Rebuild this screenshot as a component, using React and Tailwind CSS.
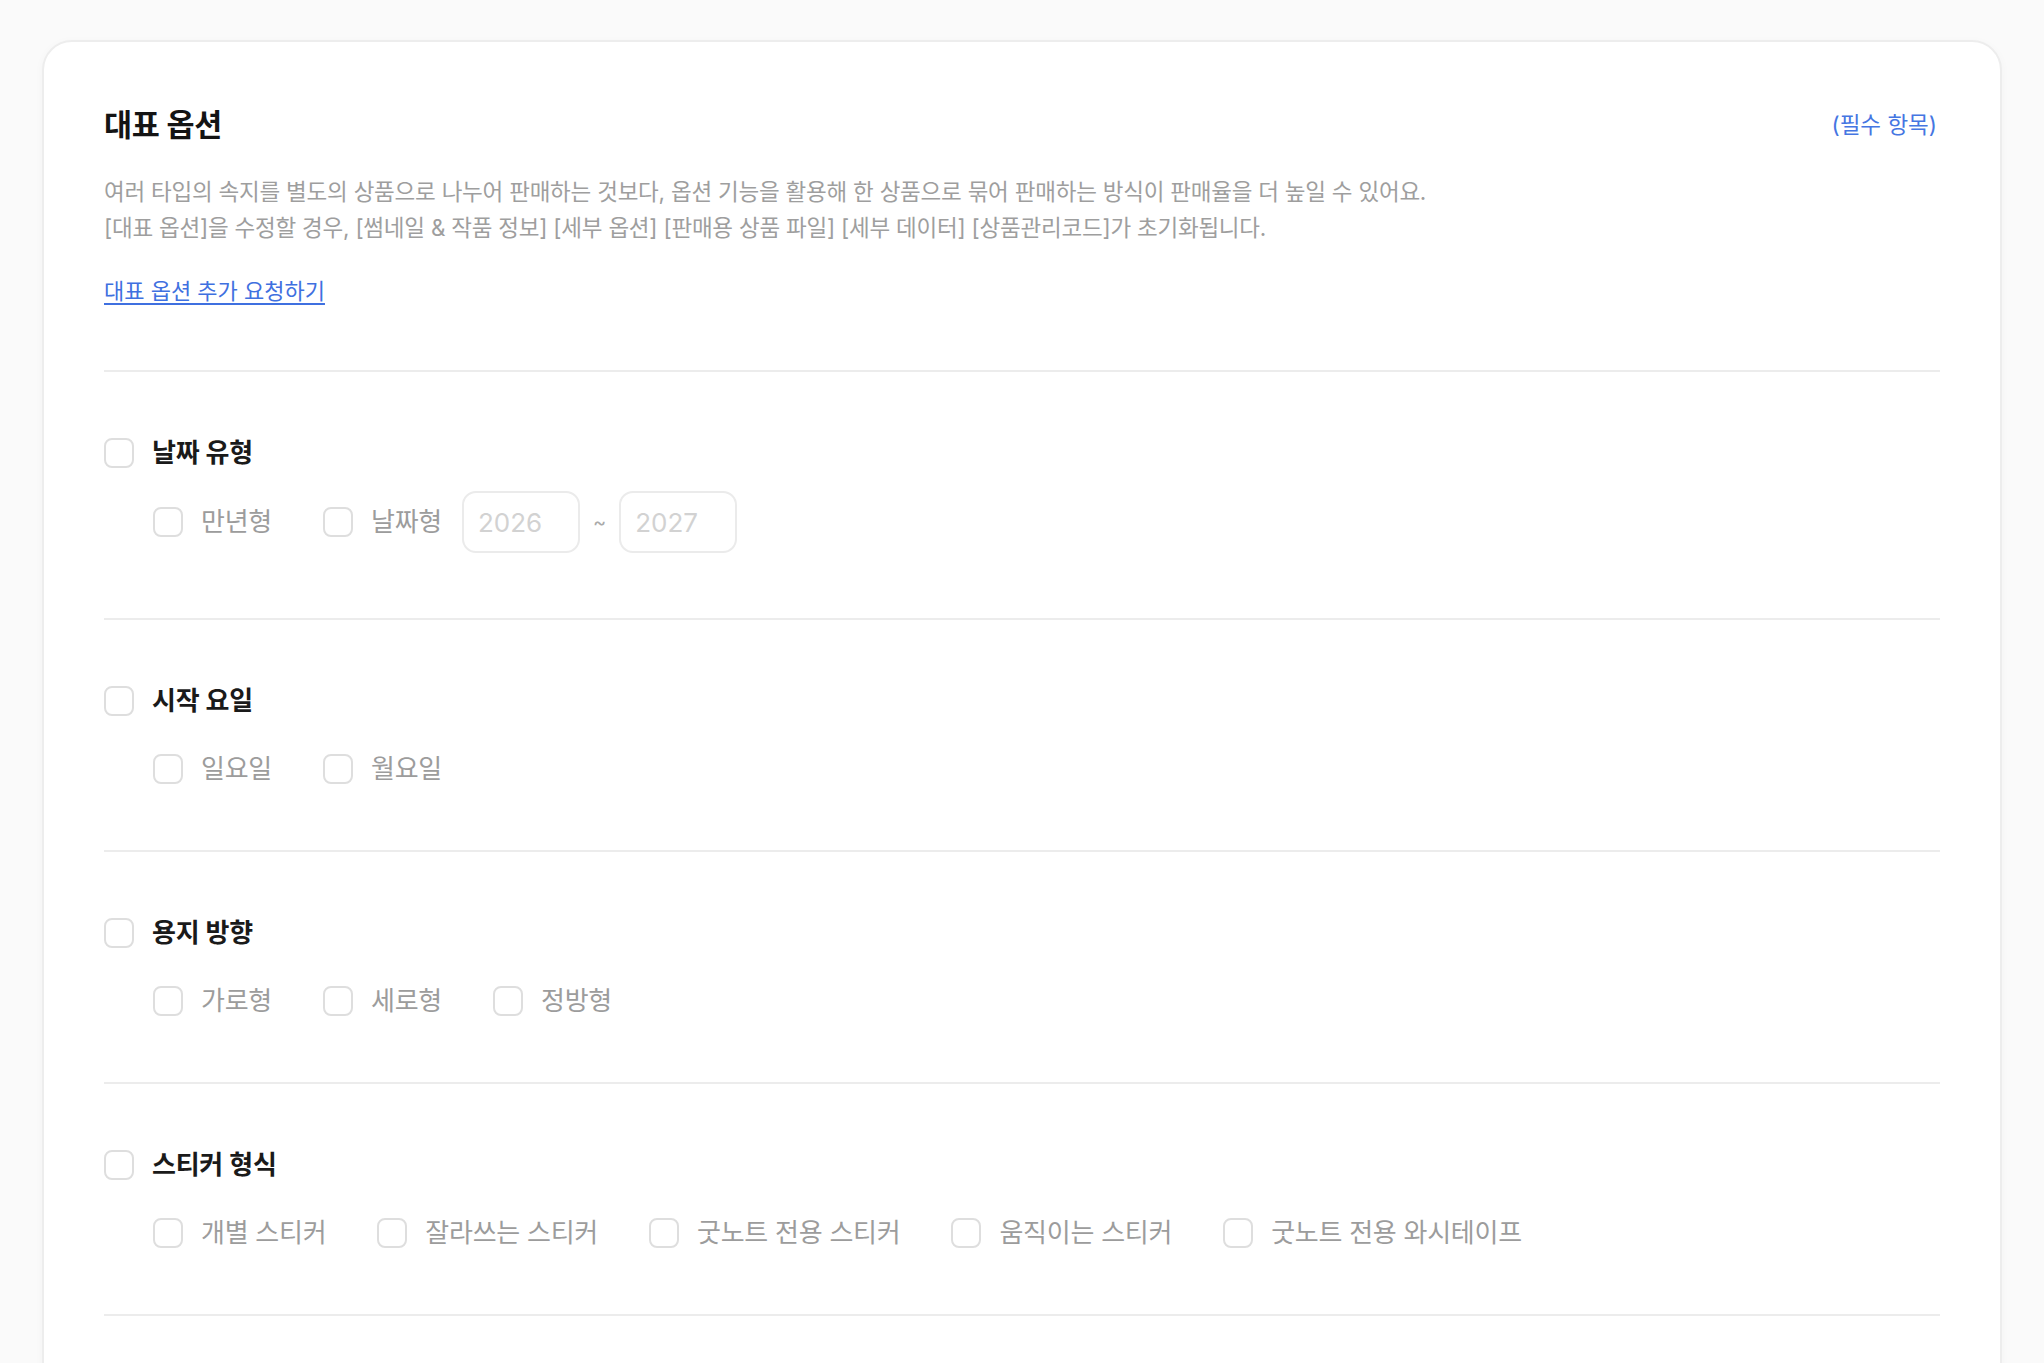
import React, { useState } from "react";

const FONT = { fontFamily: 'Inter, "Noto Sans CJK KR", "Noto Sans", sans-serif' };

const sections = [
  { title: "날짜 유형", items: ["만년형", "날짜형"], years: true },
  { title: "시작 요일", items: ["일요일", "월요일"] },
  { title: "용지 방향", items: ["가로형", "세로형", "정방형"] },
  {
    title: "스티커 형식",
    items: ["개별 스티커", "잘라쓰는 스티커", "굿노트 전용 스티커", "움직이는 스티커", "굿노트 전용 와시테이프"],
  },
];

function Box({ checked, onClick }) {
  return (
    <button
      type="button"
      onClick={onClick}
      className={`w-[30px] h-[30px] shrink-0 rounded-[8px] border-2 ${
        checked ? "border-[#3d6fe0] bg-[#3d6fe0]" : "border-[#dedede] bg-white"
      }`}
    />
  );
}

function YearInput({ placeholder }) {
  return (
    <input
      placeholder={placeholder}
      className="w-[118px] h-[62px] rounded-[14px] border-2 border-[#ebebeb] px-[14px] text-[26px] text-[#444] placeholder:text-[#d2d2d2] outline-none"
      style={FONT}
    />
  );
}

function OptionSection({ section }) {
  const [on, setOn] = useState(false);
  const [picked, setPicked] = useState([]);

  const toggle = (name) =>
    setPicked((p) => (p.includes(name) ? p.filter((x) => x !== name) : [...p, name]));

  return (
    <div
      className={`pt-[66px] border-b-2 border-[#ececec] ${section.years ? "pb-[65px]" : "pb-[66px]"}`}
    >
      {/* HEADER */}
      <div className="flex items-center gap-[18px] h-[30px]">
        <Box checked={on} onClick={() => setOn(!on)} />
        <span className="text-[26px] leading-[30px] font-semibold text-[#1a1a1a] tracking-[-0.01em]">
          {section.title}
        </span>
      </div>

      {/* SUB OPTIONS */}
      <div
        className={`flex items-center gap-[51px] pl-[49px] ${
          section.years ? "mt-[23px]" : "mt-[38px]"
        }`}
      >
        {section.items.map((name, i) => (
          <div key={name} className="flex items-center gap-[18px]">
            <Box checked={picked.includes(name)} onClick={() => toggle(name)} />
            <span className="text-[26px] leading-[30px] text-[#9c9c9c] tracking-[-0.01em]">{name}</span>
            {section.years && i === 1 && (
              <div className="flex items-center gap-[13px] ml-[2px]">
                <YearInput placeholder="2026" />
                <span className="text-[20px] text-[#aaa]">~</span>
                <YearInput placeholder="2027" />
              </div>
            )}
          </div>
        ))}
      </div>
    </div>
  );
}

export default function App() {
  return (
    <div className="min-h-screen bg-[#fafafa] px-[42px] pt-[40px]" style={FONT}>
      <div className="bg-white rounded-[30px] border-2 border-[#ededed] shadow-[0_2px_10px_rgba(0,0,0,0.03)] px-[60px] pt-[65px] pb-[90px]">
        {/* TITLE */}
        <div className="flex justify-between items-center">
          <h2 className="text-[30.5px] leading-[36px] font-bold text-[#141414] tracking-[-0.01em]">대표 옵션</h2>
          <span className="text-[22.5px] text-[#4576e2] mr-[3px]">(필수 항목)</span>
        </div>

        {/* DESCRIPTION */}
        <div className="mt-[31px] text-[22.5px] leading-[36px] text-[#9e9e9e] tracking-[-0.01em]">
          <p>
            여러 타입의 속지를 별도의 상품으로 나누어 판매하는 것보다, 옵션 기능을 활용해 한 상품으로 묶어 판매하는
            방식이 판매율을 더 높일 수 있어요.
          </p>
          <p>
            [대표 옵션]을 수정할 경우, [썸네일 &amp; 작품 정보] [세부 옵션] [판매용 상품 파일] [세부 데이터]
            [상품관리코드]가 초기화됩니다.
          </p>
        </div>

        <a
          href="#"
          className="inline-block mt-[31px] text-[22px] leading-[28px] text-[#3f70e0] underline underline-offset-[4px]"
        >
          대표 옵션 추가 요청하기
        </a>

        <div className="mt-[65px] h-[2px] bg-[#ececec]" />

        {sections.map((s) => (
          <OptionSection key={s.title} section={s} />
        ))}
      </div>
    </div>
  );
}
